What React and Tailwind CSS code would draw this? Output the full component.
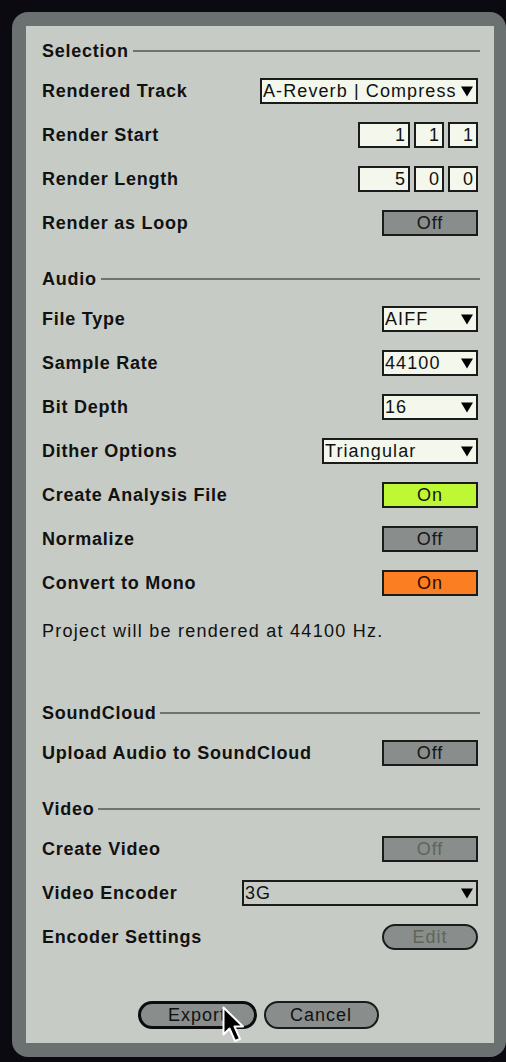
import React from "react";

const font = { fontFamily: '"Liberation Sans", Arial, sans-serif' };

function Caret() {
    return (
        <svg width="12" height="11" viewBox="0 0 12 11" className="shrink-0">
            <path d="M0 0.5h12L6 10.5z" fill="#000" />
        </svg>
    );
}

function Header({ title }) {
    return (
        <div className="h-[36px] flex items-center gap-[4px] mr-[-2px]">
            <span className="text-[18px] font-bold tracking-[0.75px] text-[#111]">{title}</span>
            <div className="flex-1 h-[2px] bg-[#6e7370]"></div>
        </div>
    );
}

function Row({ label, children }) {
    return (
        <div className="h-[44px] flex items-center justify-between">
            <span className="text-[18px] font-bold tracking-[0.75px] text-[#111]">{label}</span>
            {children}
        </div>
    );
}

function Select({ value, width, disabled }) {
    return (
        <div
            className={`h-[26px] border-2 border-[#1b1b1b] flex items-center pl-[1px] pr-[3px] overflow-hidden ${disabled ? "bg-[#c6cbc6]" : "bg-[#f3f7ec]"} ${width}`}
        >
            <span className="flex-1 text-[18px] leading-none tracking-[1.1px] text-[#111] whitespace-nowrap overflow-hidden">{value}</span>
            <Caret />
        </div>
    );
}

function Toggle({ label, tone }) {
    const tones = {
        off: "bg-[#898d8c] text-[#161616]",
        lime: "bg-[#bef733] text-[#161616]",
        orange: "bg-[#fb7e23] text-[#2a0c00]",
        dim: "bg-[#898d8c] text-[#5f6657]",
    };
    return (
        <div className={`w-[96px] h-[26px] border-2 border-[#1b1b1b] flex items-center justify-center text-[18px] tracking-[1px] ${tones[tone]}`}>
            {label}
        </div>
    );
}

function Num({ value, width }) {
    return (
        <div className={`h-[26px] border-2 border-[#1b1b1b] bg-[#f3f7ec] flex items-center justify-end pr-[3px] text-[18px] text-[#111] ${width}`}>
            {value}
        </div>
    );
}

function Cursor() {
    return (
        <svg width="24" height="38" viewBox="0 0 24 38" className="absolute left-[84px] top-[5px]">
            <path
                d="M1.5 1.5v27l6-6 5.5 12.5 5-2.2-5.5-12.3h8.5z"
                fill="#000"
                stroke="#fff"
                strokeWidth="2"
                strokeLinejoin="round"
            />
        </svg>
    );
}

export default function App() {
    return (
        <div className="h-[1062px] bg-[#0b0a10] pl-3 pt-3 overflow-hidden" style={font}>
            <div className="w-[494px] h-[1045px] bg-[#6b7170] rounded-[16px] p-[14px] pr-0">
                <div className="w-[468px] h-[1017px] bg-[#c6cbc6] px-4 pt-[7px]">
                    {/* Selection */}
                    <Header title="Selection" />
                    <Row label="Rendered Track">
                        <Select value="A-Reverb | Compress" width="w-[218px]" />
                    </Row>
                    <Row label="Render Start">
                        <div className="flex gap-[4px]">
                            <Num value="1" width="w-[52px]" />
                            <Num value="1" width="w-[30px]" />
                            <Num value="1" width="w-[30px]" />
                        </div>
                    </Row>
                    <Row label="Render Length">
                        <div className="flex gap-[4px]">
                            <Num value="5" width="w-[52px]" />
                            <Num value="0" width="w-[30px]" />
                            <Num value="0" width="w-[30px]" />
                        </div>
                    </Row>
                    <Row label="Render as Loop">
                        <Toggle label="Off" tone="off" />
                    </Row>

                    {/* Audio */}
                    <div className="mt-4">
                        <Header title="Audio" />
                        <Row label="File Type">
                            <Select value="AIFF" width="w-[96px]" />
                        </Row>
                        <Row label="Sample Rate">
                            <Select value="44100" width="w-[96px]" />
                        </Row>
                        <Row label="Bit Depth">
                            <Select value="16" width="w-[96px]" />
                        </Row>
                        <Row label="Dither Options">
                            <Select value="Triangular" width="w-[156px]" />
                        </Row>
                        <Row label="Create Analysis File">
                            <Toggle label="On" tone="lime" />
                        </Row>
                        <Row label="Normalize">
                            <Toggle label="Off" tone="off" />
                        </Row>
                        <Row label="Convert to Mono">
                            <Toggle label="On" tone="orange" />
                        </Row>
                        <div className="h-[90px] pt-4">
                            <p className="text-[18px] leading-5 tracking-[1.25px] text-[#111]">
                                Project will be rendered at 44100 Hz.
                            </p>
                        </div>
                    </div>

                    {/* SoundCloud */}
                    <Header title="SoundCloud" />
                    <Row label="Upload Audio to SoundCloud">
                        <Toggle label="Off" tone="off" />
                    </Row>

                    {/* Video */}
                    <div className="mt-4">
                        <Header title="Video" />
                        <Row label="Create Video">
                            <Toggle label="Off" tone="dim" />
                        </Row>
                        <Row label="Video Encoder">
                            <Select value="3G" width="w-[236px]" disabled />
                        </Row>
                        <Row label="Encoder Settings">
                            <div className="w-[96px] h-[26px] rounded-full border-2 border-[#1b1b1b] bg-[#898d8c] flex items-center justify-center text-[18px] tracking-[1px] text-[#5f6657]">
                                Edit
                            </div>
                        </Row>
                    </div>

                    <div className="mt-[42px] flex justify-center gap-[7px] pr-[4px]">
                        <div className="relative">
                            <div className="w-[119px] h-[28px] rounded-full border-[3px] border-[#0d0d0d] bg-[#898d8c] flex items-center justify-center text-[18px] tracking-[1px] text-[#111]">
                                Export
                            </div>
                            <Cursor />
                        </div>
                        <div className="w-[115px] h-[28px] rounded-full border-2 border-[#1b1b1b] bg-[#898d8c] flex items-center justify-center text-[18px] tracking-[1px] text-[#111]">
                            Cancel
                        </div>
                    </div>
                </div>
            </div>
        </div>
    );
}
